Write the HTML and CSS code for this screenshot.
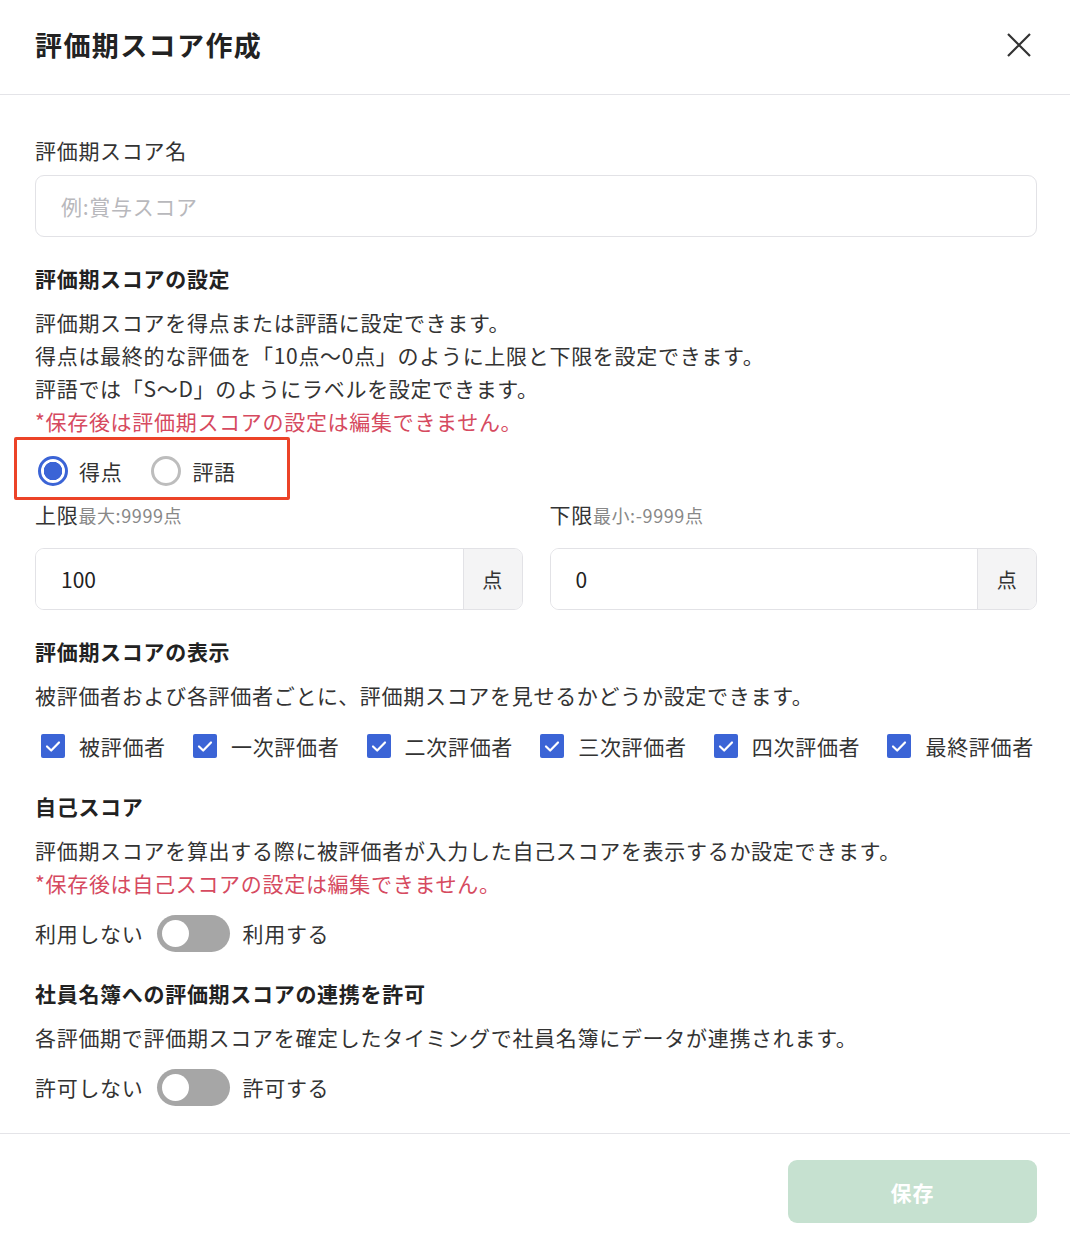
FILE: index.html
```html
<!DOCTYPE html>
<html lang="ja">
<head>
  <meta charset="UTF-8" />
  <meta name="viewport" content="width=device-width, initial-scale=1.0" />
  <title>評価期スコア作成</title>
  <link rel="stylesheet" href="styles.css">
</head>
<body>
  <div class="modal">
    <div class="modal-header">
      <h1>評価期スコア作成</h1>
      <button class="close-btn" aria-label="閉じる">
        <svg width="26" height="26" viewBox="0 0 26 26">
          <path d="M2 2 L24 24 M24 2 L2 24" stroke="#333" stroke-width="2.2" fill="none" />
        </svg>
      </button>
    </div>

    <div class="modal-body">
      <label class="field-label">評価期スコア名</label>
      <input class="text-input" type="text" placeholder="例:賞与スコア">

      <h2 class="section-title">評価期スコアの設定</h2>
      <p class="desc">
        評価期スコアを得点または評語に設定できます。<br>
        得点は最終的な評価を「10点〜0点」のように上限と下限を設定できます。<br>
        評語では「S〜D」のようにラベルを設定できます。<br>
        <span class="warn">*保存後は評価期スコアの設定は編集できません。</span>
      </p>

      <div class="radio-group">
        <label class="radio checked"><span class="radio-dot"></span>得点</label>
        <label class="radio"><span class="radio-dot"></span>評語</label>
        <div class="highlight"></div>
      </div>

      <div class="range-row">
        <div class="range-field">
          <div class="range-label">上限<small>最大:9999点</small></div>
          <div class="addon-input">
            <input type="text" value="100">
            <span class="addon">点</span>
          </div>
        </div>
        <div class="range-field">
          <div class="range-label">下限<small>最小:-9999点</small></div>
          <div class="addon-input">
            <input type="text" value="0">
            <span class="addon">点</span>
          </div>
        </div>
      </div>

      <h2 class="section-title">評価期スコアの表示</h2>
      <p class="desc">被評価者および各評価者ごとに、評価期スコアを見せるかどうか設定できます。</p>
      <div class="check-row">
        <label class="check"><span class="box"></span>被評価者</label>
        <label class="check"><span class="box"></span>一次評価者</label>
        <label class="check"><span class="box"></span>二次評価者</label>
        <label class="check"><span class="box"></span>三次評価者</label>
        <label class="check"><span class="box"></span>四次評価者</label>
        <label class="check"><span class="box"></span>最終評価者</label>
      </div>

      <h2 class="section-title">自己スコア</h2>
      <p class="desc">
        評価期スコアを算出する際に被評価者が入力した自己スコアを表示するか設定できます。<br>
        <span class="warn">*保存後は自己スコアの設定は編集できません。</span>
      </p>
      <div class="toggle-row">
        <span>利用しない</span>
        <span class="toggle"><span class="knob"></span></span>
        <span>利用する</span>
      </div>

      <h2 class="section-title">社員名簿への評価期スコアの連携を許可</h2>
      <p class="desc">各評価期で評価期スコアを確定したタイミングで社員名簿にデータが連携されます。</p>
      <div class="toggle-row">
        <span>許可しない</span>
        <span class="toggle"><span class="knob"></span></span>
        <span>許可する</span>
      </div>
    </div>

    <div class="modal-footer">
      <button class="save-btn" disabled>保存</button>
    </div>
  </div>
</body>
</html>
```

FILE: styles.css
```css
body {
  margin: 0;
  font-family: "Noto Sans CJK JP", "Noto Sans", sans-serif;
  color: #333;
  background: #fff;
  letter-spacing: 0.7px;
}

.modal {
  width: 1070px;
}

.modal-header {
  height: 95px;
  border-bottom: 1px solid #e4e4e8;
  display: flex;
  align-items: center;
  justify-content: space-between;
  padding: 0 33px 0 35px;
  box-sizing: border-box;
}

.modal-header h1 {
  margin: 0;
  margin-top: -6px;
  font-size: 27px;
  letter-spacing: 1.4px;
  font-weight: 700;
  color: #222;
}

.close-btn {
  border: none;
  background: none;
  padding: 0;
  width: 26px;
  height: 26px;
  margin-right: 5px;
  margin-top: -4px;
  cursor: pointer;
}

.modal-body {
  padding: 40px 33px 27px 35px;
  border-bottom: 1px solid #e4e4e8;
}

.field-label {
  display: block;
  font-size: 21px;
  line-height: 30px;
}

.text-input {
  display: block;
  box-sizing: border-box;
  width: 100%;
  height: 62px;
  margin-top: 10px;
  padding: 0 25px;
  border: 1.5px solid #e2e2e6;
  border-radius: 9px;
  font-family: inherit;
  font-size: 21px;
  letter-spacing: 0.7px;
  color: #333;
}

.text-input::placeholder {
  color: #b8b8bc;
}

.section-title {
  margin: 26px 0 0;
  font-size: 21px;
  line-height: 30px;
  font-weight: 700;
  color: #222;
}

.desc {
  margin: 13px 0 0;
  font-size: 21px;
  line-height: 33px;
}

.warn {
  color: #d64a60;
}

.radio-group {
  position: relative;
  display: flex;
  gap: 29px;
  margin-top: 17px;
  height: 32px;
  align-items: center;
  padding-left: 3px;
}

.radio {
  display: flex;
  align-items: center;
  gap: 11px;
  font-size: 21px;
}

.radio-dot {
  width: 30px;
  height: 30px;
  box-sizing: border-box;
  border: 3px solid #bdbdbd;
  border-radius: 50%;
}

.radio.checked .radio-dot {
  border-color: #3b64d6;
  background: radial-gradient(circle, #3b64d6 0 9px, #fff 9.5px);
}

.highlight {
  position: absolute;
  left: -21px;
  top: -18px;
  width: 276px;
  height: 63px;
  border: 3.5px solid #ec4328;
  border-radius: 2px;
  box-sizing: border-box;
}

.range-row {
  display: flex;
  gap: 27px;
  margin-top: 12px;
}

.range-field {
  flex: 1;
}

.range-label {
  font-size: 21px;
  line-height: 30px;
}

.range-label small {
  font-size: 18px;
  letter-spacing: 0.6px;
  color: #888;
}

.addon-input {
  display: flex;
  margin-top: 18px;
  height: 62px;
  box-sizing: border-box;
  border: 1.5px solid #e2e2e6;
  border-radius: 9px;
  overflow: hidden;
}

.addon-input input {
  flex: 1;
  min-width: 0;
  border: none;
  padding: 0 25px;
  font-family: inherit;
  font-size: 21px;
  color: #222;
}

.addon {
  width: 58px;
  display: flex;
  align-items: center;
  justify-content: center;
  background: #f4f4f5;
  border-left: 1.5px solid #e2e2e6;
  font-size: 20px;
  color: #333;
}

.range-row + .section-title {
  margin-top: 26px;
}

.check-row {
  display: flex;
  justify-content: space-between;
  margin-top: 19px;
  padding-left: 6px;
  padding-right: 3px;
  height: 30px;
  align-items: center;
}

.check {
  display: flex;
  align-items: center;
  gap: 14px;
  font-size: 21px;
}

.box {
  width: 24px;
  height: 24px;
  border-radius: 2px;
  background: #3b64d6 url("data:image/svg+xml;utf8,<svg xmlns='http://www.w3.org/2000/svg' width='24' height='24' viewBox='0 0 24 24'><path d='M6 12.5 L10.2 16.5 L18 8.5' stroke='white' stroke-width='2.2' fill='none' stroke-linecap='round' stroke-linejoin='round'/></svg>") center no-repeat;
}

.check-row + .section-title {
  margin-top: 30px;
}

.toggle-row {
  display: flex;
  align-items: center;
  gap: 13px;
  margin-top: 14px;
  height: 38px;
  font-size: 21px;
}

.toggle {
  display: flex;
  align-items: center;
  width: 73px;
  height: 37px;
  border-radius: 19px;
  background: #a6a6a6;
  padding: 0 5px;
  box-sizing: border-box;
}

.knob {
  width: 27px;
  height: 27px;
  border-radius: 50%;
  background: #fff;
}

.modal-footer {
  display: flex;
  justify-content: flex-end;
  padding: 26px 33px 12px 35px;
}

.save-btn {
  width: 249px;
  height: 63px;
  border: none;
  border-radius: 9px;
  background: #c6e1d0;
  color: #fff;
  font-family: inherit;
  font-size: 21px;
  letter-spacing: 1px;
  font-weight: 700;
}
```
